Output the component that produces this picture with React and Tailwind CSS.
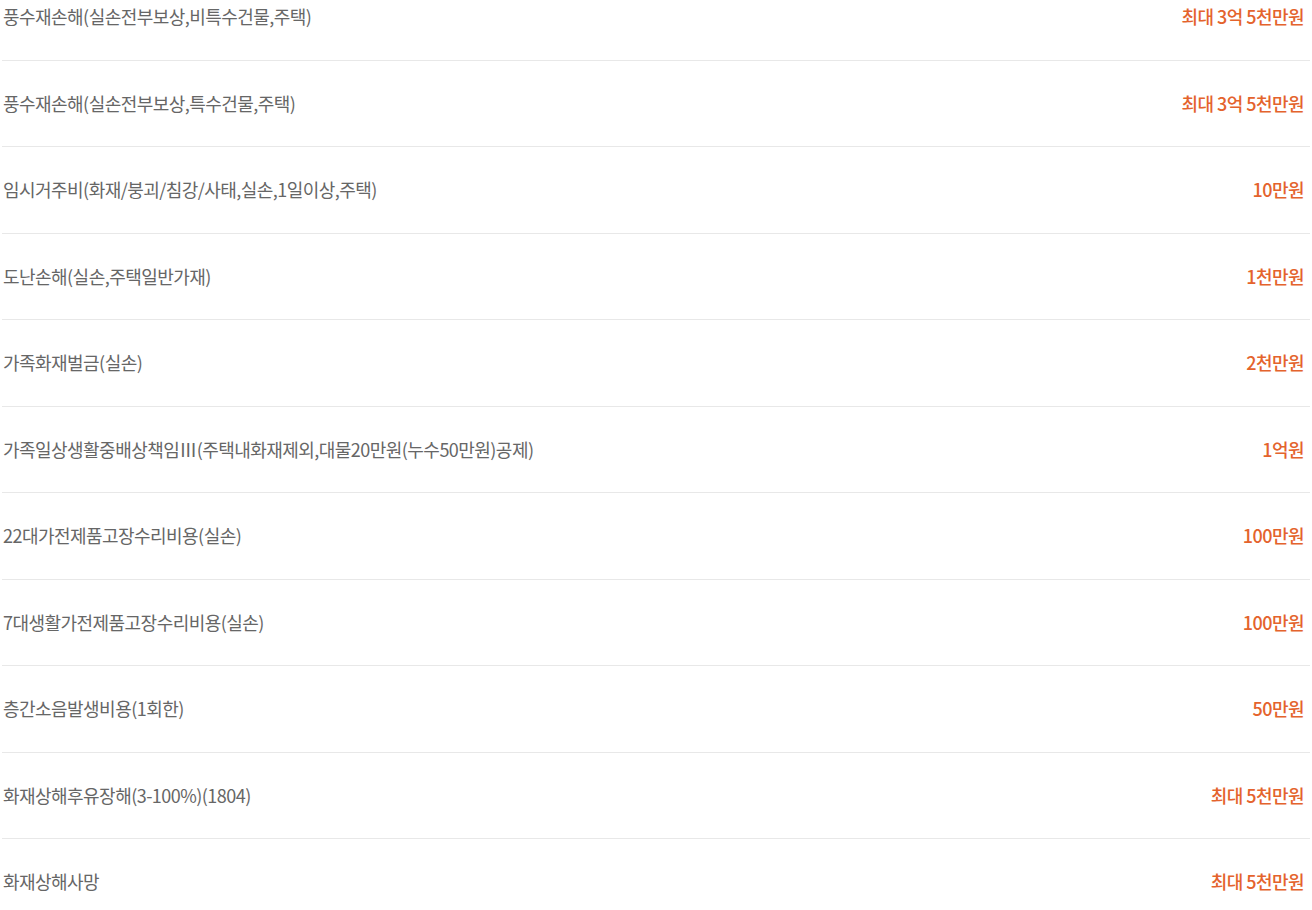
const rows = [
  ['풍수재손해(실손전부보상,비특수건물,주택)', '최대 3억 5천만원'],
  ['풍수재손해(실손전부보상,특수건물,주택)', '최대 3억 5천만원'],
  ['임시거주비(화재/붕괴/침강/사태,실손,1일이상,주택)', '10만원'],
  ['도난손해(실손,주택일반가재)', '1천만원'],
  ['가족화재벌금(실손)', '2천만원'],
  ['가족일상생활중배상책임Ⅲ(주택내화재제외,대물20만원(누수50만원)공제)', '1억원'],
  ['22대가전제품고장수리비용(실손)', '100만원'],
  ['7대생활가전제품고장수리비용(실손)', '100만원'],
  ['층간소음발생비용(1회한)', '50만원'],
  ['화재상해후유장해(3-100%)(1804)', '최대 5천만원'],
  ['화재상해사망', '최대 5천만원'],
];

export default function App() {
  return (
    <div className="w-[1312px] h-[910px] overflow-hidden bg-white font-['Noto_Sans_CJK_KR',sans-serif]">
      <ul className="-mt-[26px] pl-[2px] pr-[2px]">
        {rows.map(([label, amount], i) => (
          <li
            key={i}
            className="flex items-center justify-between h-[86.5px] border-b border-[#e8e8e8]"
          >
            <span className="pl-[1px] text-[18px] tracking-[-0.03em] text-[#666666]">{label}</span>
            <span className="pr-[6px] text-[18px] font-medium tracking-[-0.03em] text-[#e4632d]">{amount}</span>
          </li>
        ))}
      </ul>
    </div>
  );
}
